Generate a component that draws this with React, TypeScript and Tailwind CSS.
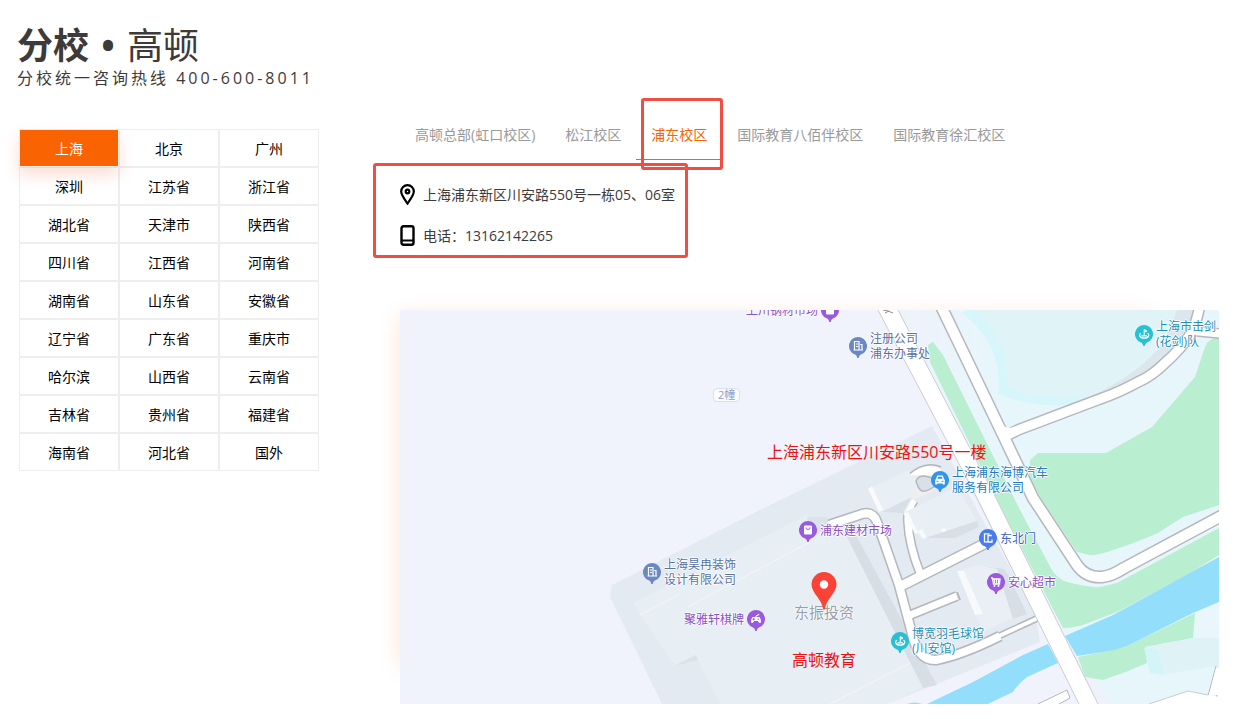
import clsx from 'clsx';

const regions = [
  '上海', '北京', '广州',
  '深圳', '江苏省', '浙江省',
  '湖北省', '天津市', '陕西省',
  '四川省', '江西省', '河南省',
  '湖南省', '山东省', '安徽省',
  '辽宁省', '广东省', '重庆市',
  '哈尔滨', '山西省', '云南省',
  '吉林省', '贵州省', '福建省',
  '海南省', '河北省', '国外',
];

const campuses = [
  '高顿总部(虹口校区)',
  '松江校区',
  '浦东校区',
  '国际教育八佰伴校区',
  '国际教育徐汇校区',
];

type PinKind = 'bag' | 'office' | 'sport' | 'car' | 'gate' | 'cart' | 'game';

interface Place {
  kind: PinKind;
  label: string;
  x: number;
  y: number;
  side?: 'left';
}

// x / y is the centre of the round head of the pin
const places: Place[] = [
  { kind: 'bag', label: '上川钢材市场', x: 430, y: 0, side: 'left' },
  { kind: 'office', label: '注册公司\n浦东办事处', x: 458, y: 36 },
  { kind: 'sport', label: '上海市击剑\n(花剑)队', x: 744, y: 24 },
  { kind: 'car', label: '上海浦东海博汽车\n服务有限公司', x: 540, y: 170 },
  { kind: 'bag', label: '浦东建材市场', x: 408, y: 220 },
  { kind: 'gate', label: '东北门', x: 588, y: 228 },
  { kind: 'cart', label: '安心超市', x: 596, y: 272 },
  { kind: 'office', label: '上海昊冉装饰\n设计有限公司', x: 252, y: 262 },
  { kind: 'game', label: '聚雅轩棋牌', x: 356, y: 309, side: 'left' },
  { kind: 'sport', label: '博宽羽毛球馆\n(川安馆)', x: 500, y: 331 },
];

const pinFill: Record<PinKind, string> = {
  bag: '#9a5ae0',
  office: '#6b88c0',
  sport: '#27c1d3',
  car: '#2f96ec',
  gate: '#4a7dec',
  cart: '#9a5ae0',
  game: '#9a5ae0',
};

const labelColor: Record<PinKind, string> = {
  bag: 'text-[#8a4fc4]',
  office: 'text-[#5a6fa0]',
  sport: 'text-[#1f8fb5]',
  car: 'text-[#2278c0]',
  gate: 'text-[#3c63c8]',
  cart: 'text-[#8a4fc4]',
  game: 'text-[#8a4fc4]',
};

function Glyph({ kind }: { kind: PinKind }) {
  switch (kind) {
    case 'bag':
      return (
        <>
          <rect x="5" y="4.500" width="8" height="9" rx="1" fill="#fff" />
          <path d="M7 6.500a2 2 0 0 0 4 0" fill="none" stroke="#9a5ae0" />
        </>
      );
    case 'office':
      return (
        <>
          <path d="M5.500 12.500v-8h4.500v8M11.200 7.500h1.800v5M4.500 13h9.500" fill="none" stroke="#fff" strokeWidth="1.2" />
          <path d="M7 7h2M7 9.500h2" stroke="#fff" />
        </>
      );
    case 'sport':
      return (
        <>
          <path d="M9.200 4.500V10.500M9.500 4.500l2.500 1.800-2.500.8" fill="#fff" stroke="#fff" />
          <path d="M6 8.200c-2.200.8-2 5 3.200 5s5.400-4.200 3.200-5M6.500 10.800h5.500" fill="none" stroke="#fff" strokeWidth="1.2" />
        </>
      );
    case 'car':
      return (
        <>
          <path d="M5 8l1.200-3.500h5.600L13 8l.8 1v4.500h-2v-1H6.200v1h-2V9z" fill="#fff" />
          <path d="M6.500 7.800l.6-2h3.800l.6 2z" fill="#2f96ec" />
          <path d="M5.500 10.300h2M10.500 10.300h2" stroke="#2f96ec" />
        </>
      );
    case 'gate':
      return <path d="M10.500 4.800H5.500v8h2.800M12.800 6.500H9V13h4v-2.500" fill="none" stroke="#fff" strokeWidth="1.3" />;
    case 'cart':
      return (
        <>
          <path d="M4 5h1.500l1 6h6l.5-5H6" fill="none" stroke="#fff" strokeWidth="1.3" />
          <path d="M7.500 6v4.500M9.500 6v4.500M11.500 6v4.500" stroke="#fff" strokeWidth="1.2" />
          <circle cx="7.500" cy="13" r="1" fill="#fff" />
          <circle cx="11.500" cy="13" r="1" fill="#fff" />
        </>
      );
    case 'game':
      return (
        <>
          <path d="M5.500 7h7c1 1 1.500 3 1.500 5.500-1.500 1-2.500 0-3-1.500H7c-.5 1.500-1.500 2.500-3 1.500C4 10 4.500 8 5.500 7z" fill="#fff" />
          <path d="M9 7c-.5-2 2-1 3-3" fill="none" stroke="#fff" strokeWidth="1.2" />
          <path d="M5.500 9.200h2.400M6.700 8v2.400M10.500 9.200H12" stroke="#9a5ae0" />
        </>
      );
  }
}

function MapPin({ place }: { place: Place }) {
  const { kind, label, x, y, side } = place;
  return (
    <div className="absolute h-[22px] w-[18px]" style={{ left: x - 9, top: y - 9 }}>
      <svg viewBox="0 0 18 22" className="block h-[22px] w-[18px]" aria-hidden="true">
        <path d="M9 0a9 9 0 0 0-3.500 17.300c1.500.7 2.500 1.700 2.800 3.700h1.400c.3-2 1.300-3 2.800-3.700A9 9 0 0 0 9 0z" fill={pinFill[kind]} />
        <Glyph kind={kind} />
      </svg>
      <span
        className={clsx(
          'absolute top-[9px] -translate-y-1/2 whitespace-pre text-[12px] leading-[15px]',
          '[text-shadow:1px_0_#fff,-1px_0_#fff,0_1px_#fff,0_-1px_#fff]',
          side === 'left' ? 'right-[21px]' : 'left-[21px]',
          labelColor[kind],
        )}
      >
        {label}
      </span>
    </div>
  );
}

interface RoadLine {
  d: string;
  width: number;
}

const compoundRoads: RoadLine[] = [
  { d: 'M829 525L862 514Q873 511 877 522L899 585 911 630Q917 661 936 660 962 655 1000 636', width: 8 },
  { d: 'M999 636L1038 618', width: 4 },
  { d: 'M899 587L990 541', width: 9 },
  { d: 'M908 616L957 596', width: 7 },
  { d: 'M914 500Q907 510 908 522 909 545 920 573', width: 7 },
];

const streets: RoadLine[] = [
  { d: 'M1225 334L1194 331', width: 8 },
  { d: 'M1006 436L1018 430 1100 399Q1120 392 1138 382 1152 376 1165 363 1180 350 1190 335 1196 325 1200 305', width: 9 },
  { d: 'M941 306L1004 437 1033 498 1077 565Q1086 578 1102 577 1112 576 1124 568L1225 514', width: 10 },
];

// all casings go below all fills, so that crossings stay open
function Roads({ lines }: { lines: RoadLine[] }) {
  return (
    <g fill="none">
      {lines.map(({ d, width }) => (
        <path key={d} d={d} stroke="#b4b7bd" strokeWidth={width + 3} />
      ))}
      {lines.map(({ d, width }) => (
        <path key={d} d={d} stroke="#fff" strokeWidth={width} />
      ))}
    </g>
  );
}

function MapDrawing() {
  return (
    <svg
      viewBox="400 310 819 394"
      preserveAspectRatio="xMinYMin slice"
      className="block h-full w-full"
      role="img"
      aria-label="浦东校区地图"
    >
      <defs>
        <linearGradient id="east" x1="0" x2="1">
          <stop offset="0" stopColor="#eef3fb" />
          <stop offset="0.3" stopColor="#e7f6fa" />
        </linearGradient>
      </defs>
      <rect x="400" y="310" width="819" height="394" fill="#f0f3fc" />
      <path d="M898 310H1219V704H1112L1078 657 997 500Z" fill="url(#east)" />
      <path d="M1078 657L1112 704H1098L1070 650Z" fill="#eff2fb" />

      {/* office compound */}
      <path d="M610 597L612 585 760 510 932 426 980 515 1035 612 1040 642 887 704H662Z" fill="#e3eaf1" />
      <path d="M932 400L984 508 1037 612" fill="none" stroke="#e2e5f0" strokeWidth="6" />
      <path d="M633 603L640 615 675 666 695 655 720 704H887L923 687 847 537 807 515Z" fill="#e7eef4" />
      <path d="M674 666l24-6-2-5z" fill="#dbe3ea" />
      <path d="M847 537h10l80 148-14 3z" fill="#d7dee6" />
      <path d="M807 517l20 0 0 12-15 8z" fill="#dbe2e9" />
      <path d="M640 615l40-21M688 607l122-65M830 704l80-41" fill="none" stroke="#f6f6f4" />

      {/* greens */}
      <path
        d="M928 345L933 342 943 355 1020 510 1053 572Q1060 580 1067 582 1090 588 1100 587L1117 583 1219 528V555L1187 575 1117 612 1083 625Q1072 628 1063 628L1052 607 1002 510 930 362Z"
        fill="#b9eed0"
      />
      <path
        d="M1029 478L1030 460 1038 453H1106L1152 427 1195 377 1205 347Q1208 338 1219 338V505L1183 517 1158 533Q1130 545 1113 550 1097 556 1090 555L1077 552 1042 500Z"
        fill="#b9eed0"
      />
      <path d="M1078 657L1103 652 1133 643 1195 613 1193 638 1145 647 1147 663Q1125 673 1103 680L1085 677Z" fill="#b9eed0" />

      {/* river */}
      <path d="M1065 636L1113 615 1219 557V602L1193 613 1133 643Q1118 650 1103 652L1077 656Z" fill="#93dffb" />
      <path d="M1048 644L1023 655 973 682 927 704H988L1013 692Q1018 684 1027 677L1058 663Z" fill="#93dffb" />
      <path d="M907 704q8-3 15 0z" fill="#93dffb" />

      {/* fencing hall */}
      <path d="M962 310Q996 330 1003 365L1001 393Q1045 412 1085 402L1150 366 1178 340 1195 310Z" fill="#e0f4f7" />
      <path d="M1177 310H1195L1183 340Q1165 365 1138 379L1075 404 1100 392Q1146 368 1165 340Z" fill="#dbe6ed" />
      <path d="M962 313L973 309Q1008 335 1008 386 1035 400 1085 396L1073 405Q1030 407 998 394 1004 345 962 313Z" fill="#d6f6fc" />

      {/* south-east building */}
      <path d="M1145 647L1193 638H1219V666L1160 675Z" fill="#dff3f7" />
      <path d="M1144 648l14 2 6 25-14-2z" fill="#d3f4f9" />
      <path d="M1195 638h24V602l-22 10z" fill="#e9f6fc" />

      {/* inner roads */}
      <Roads lines={compoundRoads} />
      <path d="M957 592l3 8" stroke="#b4b7bd" strokeWidth="2" />

      {/* drop-off loop */}
      <path d="M908 474Q925 462 941 470L944 480 932 492 912 500 904 514 904 498Z" fill="#eeefef" />
      <path d="M908 475Q925 461 941 469L938 475 914 475Z" fill="#fff" />
      <path d="M908 475Q925 460 941 467" fill="none" stroke="#b4b7bd" strokeWidth="1.500" />
      <path d="M916 481q2-5 8-5l9 2 2 8q-8 6-13 5-4-2-6-10z" fill="#d9e0e8" stroke="#b4b7bd" strokeWidth="1.500" />

      {/* small buildings */}
      <path d="M870 489L908 470 917 486 912 497 882 511Z" fill="#e9f0f5" />
      <path d="M882 512L912 497 903 513Z" fill="#d8dfe7" />
      <path d="M868 489l4-3 11 24-4 2z" fill="#f8fafb" />
      <path d="M905 512L957 487 977 521 921 539Z" fill="#e9f0f5" />
      <path d="M903 513l5-1 10 21-3 1zM918 531l4-2 5 9-4 1zM941 529l4-1 5 10-4 0z" fill="#f8fafb" />
      <path d="M977 521l-52 17 30 0 24-11z" fill="#d8dfe7" />
      <path d="M957 571L978 565 997 567 1013 618 983 632Z" fill="#e9eff4" />
      <path d="M984 566l20 3 6 9 17 36-14 5-16-50z" fill="#d7dee6" />
      <path d="M957 571l7 0 19 43-8 1z" fill="#f7f9fa" />

      {/* streets */}
      <Roads lines={streets} />
      <path d="M998 419q5 9 12 9l8-2-3 9-7 5v9l-10-16z" fill="#fff" />

      <path d="M878 310L978 500 1079 704H1098L997 500 898 310Z" fill="#fff" />
      <path d="M878 310L978 500 1079 704M1098 704L997 500 898 310" fill="none" stroke="#c9ccd4" />
      <path d="M883 310l5 1 5 2M885 313l4-2" stroke="#8d8d8d" fill="none" />

      <path d="M1038 704L1067 690 1070 698 1059 704" fill="#fff" stroke="#b4b7bd" />
      <path d="M1208 696L1216 666M1216 698L1219 686" fill="none" stroke="#b4b7bd" />
      <path d="M1209 695L1216 668H1219V695Z" fill="#fff" />
      <path d="M1149 704L1188 691 1219 697V704Z" fill="#fff" />
      <path d="M1149 704L1188 691 1208 695" fill="none" stroke="#c9ccd4" />
    </svg>
  );
}

function CampusMap() {
  return (
    <div className="relative h-[394px]">
      <div className="absolute left-0 top-0 h-[350px] w-[92%] shadow-[0_6px_20px_rgba(249,98,5,0.18)]" />
      <div className="relative h-full overflow-hidden">
        <MapDrawing />

        <span className="absolute left-[313px] top-[78px] rounded-sm border border-[#d5e0f0] bg-[#fafcff] px-1 text-[11px] leading-[12px] text-[#8fa0c4]">
          2幢
        </span>
        {places.map((place) => (
          <MapPin key={place.label} place={place} />
        ))}

        <span className="absolute left-[394px] top-[292px] text-[15px] leading-[20px] text-[#9a9fa8] [text-shadow:1px_0_#fff,-1px_0_#fff]">
          东振投资
        </span>
        <svg viewBox="0 0 26 38" className="absolute left-[411px] top-[262px] h-[38px] w-[26px]" aria-hidden="true">
          <path d="M13 0A12.500 12.500 0 0 0 .5 12.500C.5 21 11 27 12.200 37.500h1.600C15 27 25.500 21 25.500 12.500A12.500 12.500 0 0 0 13 0z" fill="#fa4336" />
          <circle cx="13" cy="12.500" r="4.200" fill="#fff" />
        </svg>
        <span className="absolute left-[367px] top-[132px] whitespace-nowrap text-[16px] leading-[20px] text-[#ee1111]">
          上海浦东新区川安路550号一楼
        </span>
        <span className="absolute left-[392px] top-[340px] text-[16px] leading-[20px] text-[#ee1111]">
          高顿教育
        </span>
      </div>
    </div>
  );
}

export default function App() {
  return (
    <div className="bg-white pb-[15px] pl-[17px] pr-[35px] pt-[26px] font-['Open_Sans','Noto_Sans_CJK_SC',sans-serif] text-[14px] leading-[20px] text-black">
      <header className="text-[#3e3a39]">
        <h1 className="flex items-center text-[36px] leading-[40px]">
          <b className="font-bold">分校</b>
          <b className="w-[38px] text-center font-bold">•</b>
          <span>高顿</span>
        </h1>
        <p className="text-[16px] leading-[24px] tracking-[3px]">分校统一咨询热线 400-600-8011</p>
      </header>

      <div className="flex items-start pt-5">
        <nav className="ml-0.5 mt-[19px] grid w-[300px] shrink-0 grid-cols-3">
          {regions.map((region, i) => (
            <button
              key={region}
              type="button"
              className={clsx(
                'h-[38px] border border-[#eee] bg-clip-padding pt-0.5',
                i === 0 && 'relative bg-[#f96302] text-white shadow-[0_8px_16px_rgba(230,90,40,0.2)]',
              )}
            >
              {region}
            </button>
          ))}
        </nav>

        <main className="ml-[81px] min-w-0 flex-1">
          <div className="flex whitespace-nowrap">
            {campuses.map((campus) => {
              const active = campus === '浦东校区';
              return (
                <button
                  key={campus}
                  type="button"
                  className={clsx(
                    'relative h-[50px] border-b px-[15px]',
                    active ? 'border-[#f96302] text-[#f96302]' : 'border-transparent text-[#999]',
                  )}
                >
                  {campus}
                  {active && (
                    <span className="absolute -bottom-[11px] -right-px -top-[12px] left-[5px] rounded-[3px] border-3 border-[#f04d43]" />
                  )}
                </button>
              );
            })}
          </div>

          <address className="relative mt-[24px] flex w-fit flex-col gap-[20px] not-italic text-[#3e3a39]">
            <span className="absolute -bottom-[12px] -left-[27px] -right-[13px] -top-[21px] rounded-[3px] border-3 border-[#f04d43]" />
            <div className="flex items-center gap-[8px]">
              <svg viewBox="0 0 15 21" className="h-[21px] w-[15px]" fill="none" stroke="#000" strokeWidth="2.200" aria-hidden="true">
                <path d="M7.500 19.500C4 14.500 1.200 11 1.200 7.500a6.300 6.300 0 0 1 12.600 0c0 3.500-2.800 7-6.300 12z" />
                <circle cx="7.500" cy="7.500" r="1.800" />
              </svg>
              <span>上海浦东新区川安路550号一栋05、06室</span>
            </div>
            <div className="flex items-center gap-[8px]">
              <svg viewBox="0 0 15 21" className="h-[21px] w-[15px]" fill="none" stroke="#000" strokeWidth="2.400" aria-hidden="true">
                <rect x="1.500" y="1.200" width="12" height="18.600" rx="2" />
                <path d="M1.500 15.500h12" strokeWidth="2" />
              </svg>
              <span>电话：13162142265</span>
            </div>
          </address>

          <div className="mt-[64px]">
            <CampusMap />
          </div>
        </main>
      </div>
    </div>
  );
}
